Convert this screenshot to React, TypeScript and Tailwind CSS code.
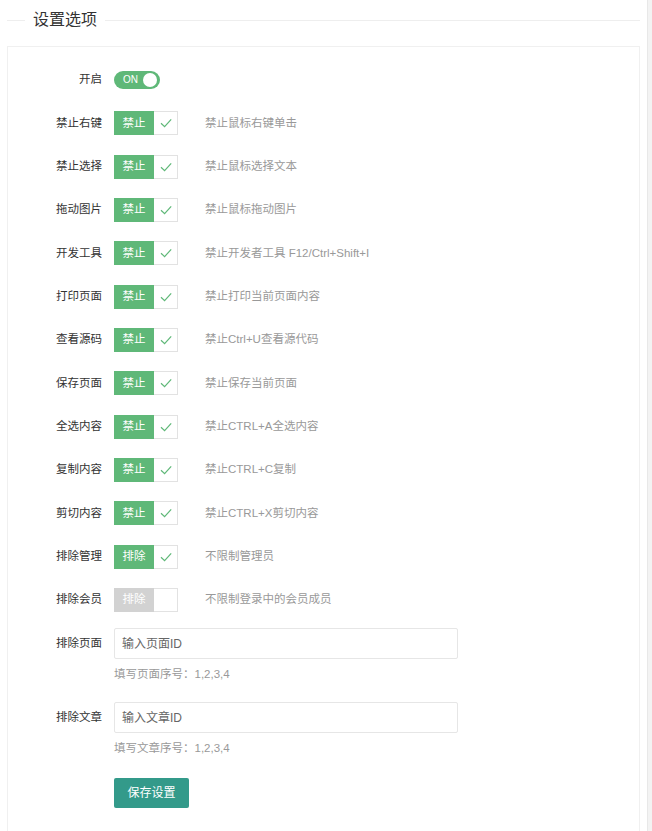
import React from "react";

const rows: { label: string; btn: string; desc: string; on: boolean }[] = [
  { label: "禁止右键", btn: "禁止", desc: "禁止鼠标右键单击", on: true },
  { label: "禁止选择", btn: "禁止", desc: "禁止鼠标选择文本", on: true },
  { label: "拖动图片", btn: "禁止", desc: "禁止鼠标拖动图片", on: true },
  { label: "开发工具", btn: "禁止", desc: "禁止开发者工具 F12/Ctrl+Shift+I", on: true },
  { label: "打印页面", btn: "禁止", desc: "禁止打印当前页面内容", on: true },
  { label: "查看源码", btn: "禁止", desc: "禁止Ctrl+U查看源代码", on: true },
  { label: "保存页面", btn: "禁止", desc: "禁止保存当前页面", on: true },
  { label: "全选内容", btn: "禁止", desc: "禁止CTRL+A全选内容", on: true },
  { label: "复制内容", btn: "禁止", desc: "禁止CTRL+C复制", on: true },
  { label: "剪切内容", btn: "禁止", desc: "禁止CTRL+X剪切内容", on: true },
  { label: "排除管理", btn: "排除", desc: "不限制管理员", on: true },
  { label: "排除会员", btn: "排除", desc: "不限制登录中的会员成员", on: false },
];

function Check({ text, on }: { text: string; on: boolean }) {
  return (
    <div className="flex h-[24px] w-[64px]">
      <div
        className={`flex w-[40px] items-center justify-center text-[11.5px] text-white ${
          on ? "bg-[#5fb878]" : "bg-[#d2d2d2]"
        }`}
      >
        {text}
      </div>
      <div className="flex w-[24px] items-center justify-center border border-l-0 border-[#e2e2e2] bg-white">
        {on && (
          <svg width="14" height="14" viewBox="0 0 14 14" fill="none">
            <path d="M2 7.2 L5.6 10.6 L12.2 3.4" stroke="#5fb878" strokeWidth="1.2" />
          </svg>
        )}
      </div>
    </div>
  );
}

function Label({ children }: { children: React.ReactNode }) {
  return (
    <div className="w-[106px] shrink-0 pr-[12px] text-right text-[11.5px] text-[#333]">
      {children}
    </div>
  );
}

export default function App() {
  return (
    <div
      className="relative min-h-[831px] w-[652px] bg-white"
      style={{ fontFamily: '"Liberation Sans", "Noto Sans CJK SC", sans-serif' }}
    >
      <div className="absolute right-0 top-0 h-full w-[5px] border-l border-[#e8e8e8] bg-[#f3f3f3]" />
      {/* title */}
      <div className="flex items-center pt-[10px] pl-[7px] pr-[12px]">
        <div className="h-px w-[18px] bg-[#eeeeee]" />
        <div className="px-[8px] text-[16px] leading-[20px] text-[#333]">设置选项</div>
        <div className="h-px flex-1 bg-[#eeeeee]" />
      </div>
      {/* card */}
      <div className="ml-[7px] mt-[16px] w-[633px] border border-b-0 border-[#f0f0f0] pt-[18px] pb-[24px]">
        <div className="mb-[13.33px] flex h-[30px] items-center">
          <Label>开启</Label>
          <div className="flex h-[18px] w-[46px] items-center justify-between rounded-full bg-[#5fb878] pl-[9px] pr-[3px]">
            <span className="text-[10px] leading-none text-white">ON</span>
            <span className="h-[14px] w-[14px] rounded-full bg-white" />
          </div>
        </div>
        {rows.map((r) => (
          <div key={r.label} className="mb-[13.33px] flex h-[30px] items-center">
            <Label>{r.label}</Label>
            <Check text={r.btn} on={r.on} />
            <div className="ml-[27px] text-[11.5px] text-[#999]">{r.desc}</div>
          </div>
        ))}
        <div className="flex items-center">
          <Label>排除页面</Label>
          <div className="flex h-[31px] w-[344px] items-center rounded-[2px] border border-[#e6e6e6] pl-[7px] text-[12px] text-[#666]">
            输入页面ID
          </div>
        </div>
        <div className="ml-[106px] mt-[8px] text-[11.5px] leading-[14px] text-[#999]">填写页面序号：1,2,3,4</div>
        <div className="mt-[21px] flex items-center">
          <Label>排除文章</Label>
          <div className="flex h-[31px] w-[344px] items-center rounded-[2px] border border-[#e6e6e6] pl-[7px] text-[12px] text-[#666]">
            输入文章ID
          </div>
        </div>
        <div className="ml-[106px] mt-[8px] text-[11.5px] leading-[14px] text-[#999]">填写文章序号：1,2,3,4</div>
        <div className="ml-[106px] mt-[23px] flex h-[30px] w-[75px] items-center justify-center rounded-[2px] bg-[#339a8a] text-[12px] text-white">
          保存设置
        </div>
      </div>
    </div>
  );
}
